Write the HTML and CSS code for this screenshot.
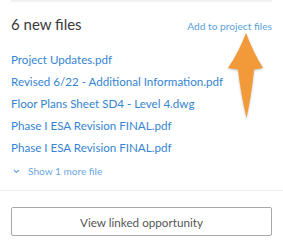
FILE: index.html
```html
<!DOCTYPE html>
<html lang="en">
<head>
    <meta charset="UTF-8">
    <meta name="viewport" content="width=device-width, initial-scale=1.0">
    <title>New files</title>
    <link rel="stylesheet" href="styles.css">
</head>
<body>
    <div class="top-rule"></div>

    <section class="files">
        <div class="files-head">
            <h2 class="files-title">6 new files</h2>
            <a class="add-link" href="#">Add to project files</a>
        </div>
        <ul class="file-list">
            <li><a href="#">Project Updates.pdf</a></li>
            <li><a href="#">Revised 6/22 - Additional Information.pdf</a></li>
            <li><a href="#">Floor Plans Sheet SD4 - Level 4.dwg</a></li>
            <li><a href="#">Phase I ESA Revision FINAL.pdf</a></li>
            <li><a href="#">Phase I ESA Revision FINAL.pdf</a></li>
        </ul>
        <a class="show-more" href="#">
            <svg class="chevron" width="7" height="5" viewBox="0 0 7 5"><path d="M1 1 L3.5 3.5 L6 1" fill="none" stroke="currentColor" stroke-width="1.1"/></svg>
            Show 1 more file
        </a>
    </section>

    <section class="actions">
        <button class="btn-outline">View linked opportunity</button>
    </section>

    <svg class="arrow" width="40" height="92" viewBox="0 0 40 92">
        <path d="M20 3 Q13 22 2 38 L12 39.5 Q14.5 62 20.5 88 Q26 62 28 39.5 L37 38 Q27 22 20 3 Z" fill="#f29a3a"/>
    </svg>
</body>
</html>
```

FILE: styles.css
```css
body {
    margin: 0;
    background: #fff;
    font-family: Lato, "Noto Sans", sans-serif;
    width: 283px;
    height: 250px;
    overflow: hidden;
    position: relative;
}
.top-rule {
    height: 2px;
    margin: 0 11px;
    background: #f1f1f1;
}
.files {
    padding: 0 11px 8px;
    border-bottom: 1px solid #ececec;
}
.files-head {
    display: flex;
    justify-content: space-between;
    align-items: baseline;
    margin-top: 12px;
    line-height: 20px;
}
.files-title {
    margin: 0;
    font-size: 15px;
    font-weight: normal;
    color: #3a3a3a;
}
.add-link {
    font-size: 10.2px;
    color: #5a9fdc;
    text-decoration: none;
}
.file-list {
    list-style: none;
    margin: 11px 0 0;
    padding: 0;
}
.file-list li {
    height: 22px;
    line-height: 22px;
}
.file-list a {
    font-size: 11.6px;
    color: #3584d2;
    text-decoration: none;
}
.show-more {
    display: flex;
    align-items: center;
    gap: 8px;
    margin-top: 3px;
    padding-left: 2px;
    height: 22px;
    font-size: 10.1px;
    color: #6aa7e0;
    text-decoration: none;
}
.chevron {
    margin-top: 1px;
}
.actions {
    padding: 16px 11px 15px;
    border-bottom: 1px solid #e6e6e6;
}
.btn-outline {
    display: block;
    width: 100%;
    height: 29px;
    border: 1px solid #a8a8a8;
    border-radius: 2px;
    background: #fff;
    font-family: Lato, "Noto Sans", sans-serif;
    font-size: 11.7px;
    color: #555;
}
.arrow {
    position: absolute;
    left: 226px;
    top: 30px;
    filter: drop-shadow(0 1px 1px rgba(0, 0, 0, 0.25));
}
```
